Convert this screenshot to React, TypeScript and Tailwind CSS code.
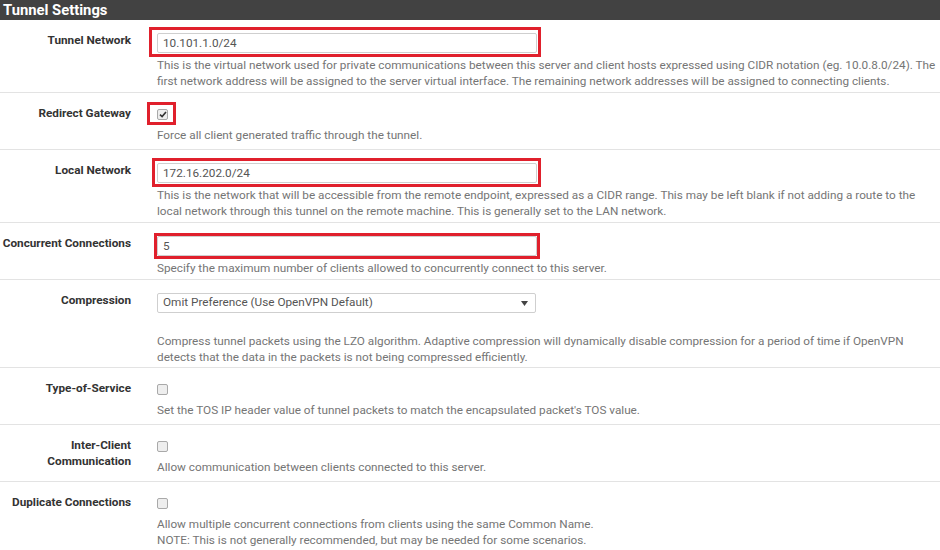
import type { ReactNode } from 'react';

type Box = { l: number; t: number; r: number; b: number };

function Highlight({ box }: { box: Box }) {
  return (
    <span
      className="pointer-events-none absolute border-[3px] border-[#e0202c]"
      style={{ left: -box.l, top: -box.t, right: -box.r, bottom: -box.b }}
    />
  );
}

function TextField({ value, box }: { value: string; box?: Box }) {
  return (
    <div className="relative w-[380px] h-5 border border-[#cfcfcf] rounded-[2px] bg-white px-[5px] text-[11.75px] leading-[18px] text-[#555]">
      {value}
      {box && <Highlight box={box} />}
    </div>
  );
}

function Check({ checked, box }: { checked?: boolean; box?: Box }) {
  return (
    <div className="h-[21px] pt-[3px]">
      <span className="relative flex w-[11px] h-[11px] items-center justify-center rounded-[2px] border border-[#a9a9a9] bg-[#eeeeee]">
        {checked && (
          <svg width="8" height="7" viewBox="0 0 8 7">
            <path d="M1 3.6 L3.1 5.6 L7 1" fill="none" stroke="#333" strokeWidth="1.6" />
          </svg>
        )}
        {box && <Highlight box={box} />}
      </span>
    </div>
  );
}

function Help({ lines, className = 'mt-1' }: { lines: string[]; className?: string }) {
  return (
    <div className={`${className} text-[11.75px] leading-4 text-[#757575] whitespace-nowrap`}>
      {lines.map((l) => (
        <div key={l}>{l}</div>
      ))}
    </div>
  );
}

function Row({ label, children, last, pb = 'pb-[3px]' }: { label: ReactNode; children: ReactNode; last?: boolean; pb?: string }) {
  return (
    <div className={`flex ${last ? '' : 'border-b border-[#e3e3e3]'}`}>
      <div className="w-[143px] shrink-0 pr-3 pt-[12px] text-right text-[11.75px] leading-4 font-bold text-[#333]">
        {label}
      </div>
      <div className={`flex-1 pl-[14px] pt-[13px] ${pb}`}>{children}</div>
    </div>
  );
}

export default function App() {
  return (
    <div className="w-[940px] h-[550px] overflow-hidden bg-white font-['Roboto',sans-serif]">
      <div className="h-5 bg-[#424242] pl-[3px] text-[14.8px] leading-5 font-bold text-white">Tunnel Settings</div>

      <Row label="Tunnel Network">
        <TextField value="10.101.1.0/24" box={{ l: 9, t: 7, r: 5, b: 5 }} />
        <Help
          lines={[
            'This is the virtual network used for private communications between this server and client hosts expressed using CIDR notation (eg. 10.0.8.0/24). The',
            'first network address will be assigned to the server virtual interface. The remaining network addresses will be assigned to connecting clients.',
          ]}
        />
      </Row>

      <Row label="Redirect Gateway" pb="pb-[6px]">
        <Check checked box={{ l: 11, t: 8, r: 9, b: 6 }} />
        <Help className="mt-0" lines={['Force all client generated traffic through the tunnel.']} />
      </Row>

      <Row label="Local Network">
        <TextField value="172.16.202.0/24" box={{ l: 6, t: 6, r: 5, b: 5 }} />
        <Help
          lines={[
            'This is the network that will be accessible from the remote endpoint, expressed as a CIDR range. This may be left blank if not adding a route to the',
            'local network through this tunnel on the remote machine. This is generally set to the LAN network.',
          ]}
        />
      </Row>

      <Row label="Concurrent Connections">
        <TextField value="5" box={{ l: 4, t: 4, r: 4, b: 4 }} />
        <Help lines={['Specify the maximum number of clients allowed to concurrently connect to this server.']} />
      </Row>

      <Row label="Compression" pb="pb-[2px]">
        <div className="flex w-[379px] h-5 items-center justify-between border border-[#cfcfcf] rounded-[2px] bg-white pl-[5px] pr-[7px] text-[11.75px] text-[#555]">
          <span>Omit Preference (Use OpenVPN Default)</span>
          <svg width="7" height="5" viewBox="0 0 7 5">
            <polygon points="0,0 7,0 3.5,5" fill="#444" />
          </svg>
        </div>
        <Help
          className="mt-5"
          lines={[
            'Compress tunnel packets using the LZO algorithm. Adaptive compression will dynamically disable compression for a period of time if OpenVPN',
            'detects that the data in the packets is not being compressed efficiently.',
          ]}
        />
      </Row>

      <Row label="Type-of-Service" pb="pb-[6px]">
        <Check />
        <Help className="mt-0" lines={["Set the TOS IP header value of tunnel packets to match the encapsulated packet's TOS value."]} />
      </Row>

      <Row
        pb="pb-[6px]"
        label={
          <>
            Inter-Client
            <br />
            Communication
          </>
        }
      >
        <Check />
        <Help className="mt-0" lines={['Allow communication between clients connected to this server.']} />
      </Row>

      <Row label="Duplicate Connections" last>
        <Check />
        <Help
          className="mt-0"
          lines={[
            'Allow multiple concurrent connections from clients using the same Common Name.',
            'NOTE: This is not generally recommended, but may be needed for some scenarios.',
          ]}
        />
      </Row>
    </div>
  );
}
